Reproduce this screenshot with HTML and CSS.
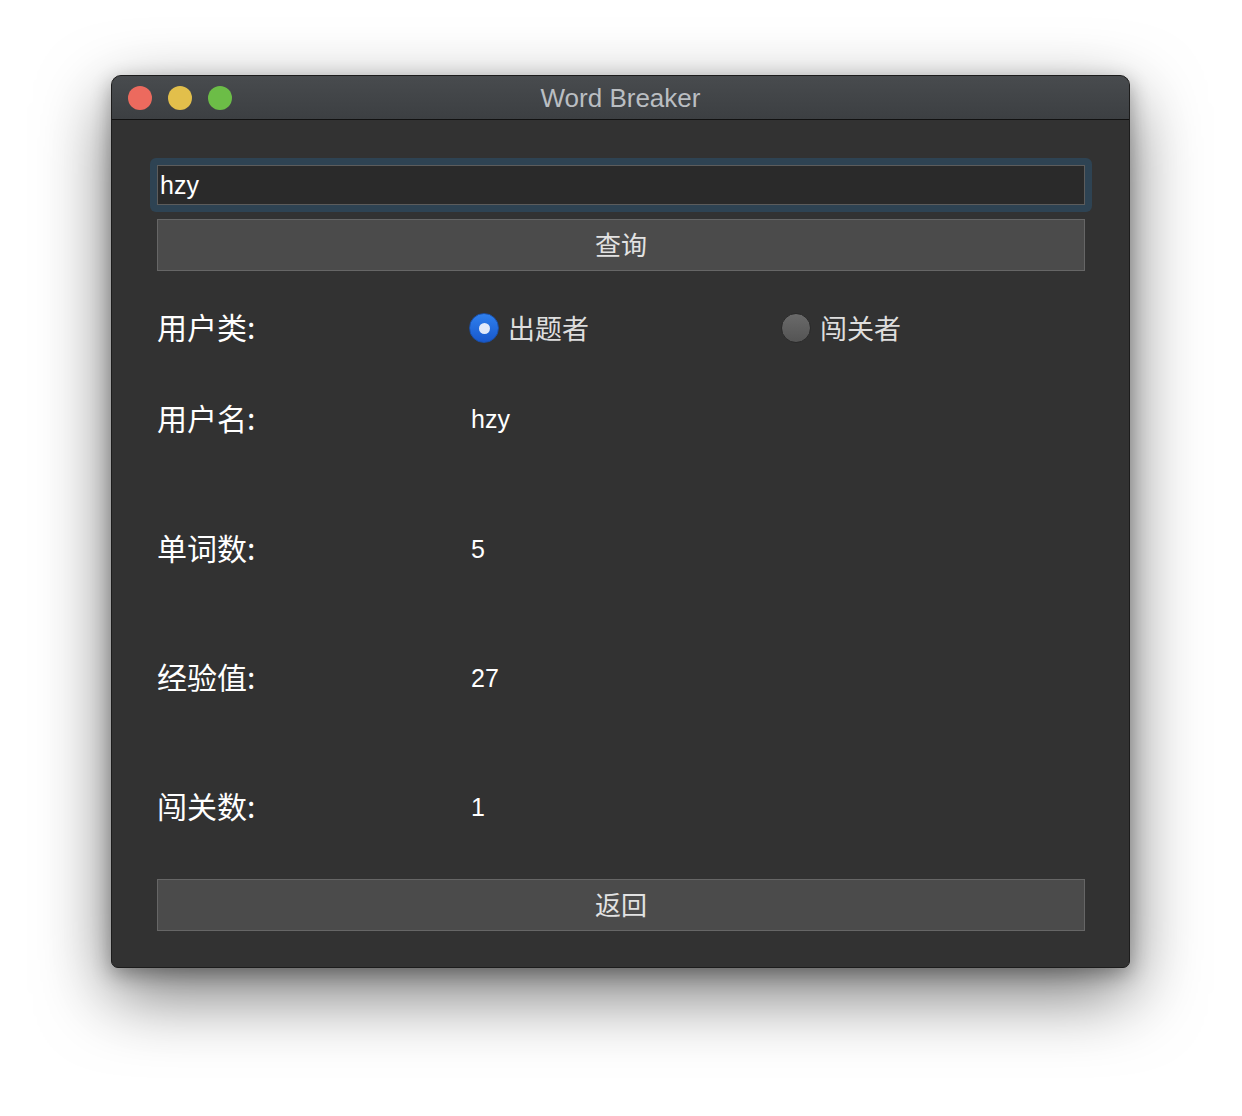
FILE: index.html
```html
<!DOCTYPE html>
<html lang="zh-CN">
<head>
  <meta charset="UTF-8">
  <meta name="viewport" content="width=device-width, initial-scale=1.0">
  <title>Word Breaker</title>
  <link rel="stylesheet" href="styles.css">
</head>
<body>
  <div class="window">
    <div class="titlebar">
      <div class="lights">
        <span class="light close"></span>
        <span class="light min"></span>
        <span class="light max"></span>
      </div>
      <div class="title">Word Breaker</div>
      <div></div>
    </div>
    <div class="content">
      <div class="focus-ring">
        <input type="text" class="search-input" value="hzy">
      </div>
      <button type="button" class="btn">查询</button>

      <div class="info">
        <div class="label">用户类:</div>
        <label class="radio">
          <span class="radio-dot checked"></span>
          <span class="radio-text">出题者</span>
        </label>
        <label class="radio">
          <span class="radio-dot"></span>
          <span class="radio-text">闯关者</span>
        </label>

        <div class="label">用户名:</div>
        <div class="value">hzy</div>
        <div></div>

        <div class="label">单词数:</div>
        <div class="value">5</div>
        <div></div>

        <div class="label">经验值:</div>
        <div class="value">27</div>
        <div></div>

        <div class="label">闯关数:</div>
        <div class="value">1</div>
        <div></div>
      </div>

      <button type="button" class="btn btn-back">返回</button>
    </div>
  </div>
</body>
</html>
```

FILE: styles.css
```css
html {
  background-color: #ffffff;
}

body {
  margin: 0;
  min-height: 1116px;
  box-sizing: border-box;
  padding: 75px 111px 0;
  background-color: #ffffff;
  font-family: "Liberation Sans", "Noto Sans CJK SC", sans-serif;
}

.window {
  width: 1019px;
  box-sizing: border-box;
  border: 1px solid #1c1c1c;
  border-radius: 10px 10px 7px 7px;
  background-color: #323232;
  box-shadow: 0 26px 70px rgba(0, 0, 0, 0.55), 0 6px 20px rgba(0, 0, 0, 0.3);
  overflow: hidden;
}

.titlebar {
  height: 43px;
  display: grid;
  grid-template-columns: 1fr auto 1fr;
  align-items: center;
  background: linear-gradient(#484b4e, #3c3f42);
  border-bottom: 1px solid #111111;
}

.lights {
  display: flex;
  gap: 16px;
  padding-left: 16px;
}

.light {
  width: 24px;
  height: 24px;
  border-radius: 50%;
}

.close { background-color: #ec6a5e; }
.min { background-color: #e2bf4b; }
.max { background-color: #6cbd47; }

.title {
  font-size: 26px;
  color: #babec2;
  padding-top: 2px;
}

.content {
  padding: 38px 44px 36px 45px;
}

.focus-ring {
  margin: 0 -7px;
  padding: 7px;
  border-radius: 6px;
  background-color: #2e4353;
}

.search-input {
  display: block;
  width: 100%;
  height: 40px;
  box-sizing: border-box;
  margin: 0;
  padding: 0 2px;
  border: 1px solid #5c5c5c;
  background-color: #2a2a2a;
  color: #ffffff;
  font-family: "Liberation Sans", sans-serif;
  font-size: 25px;
  outline: none;
}

.btn {
  display: block;
  width: 100%;
  height: 52px;
  margin-top: 7px;
  padding: 0 0 4px;
  border: 1px solid #666666;
  background-color: #4b4b4b;
  color: #e2e2e2;
  font-family: "Noto Sans CJK SC", sans-serif;
  font-size: 26px;
}

.btn-back {
  margin-top: 52px;
}

.info {
  margin-top: 37px;
  display: grid;
  grid-template-columns: 313px 312px 1fr;
  grid-template-rows: 91px 130px 129px 129px 40px;
  align-items: start;
}

.label {
  height: 40px;
  line-height: 36px;
  color: #ffffff;
  font-family: "Noto Sans CJK SC", sans-serif;
  font-size: 30px;
}

.value {
  height: 40px;
  line-height: 40px;
  color: #ffffff;
  font-size: 25px;
  padding-left: 1px;
}

.radio {
  height: 40px;
  display: flex;
  align-items: center;
  gap: 9px;
  margin-left: -1px;
}

.radio-dot {
  width: 30px;
  height: 30px;
  box-sizing: border-box;
  border-radius: 50%;
  background: linear-gradient(#6a6a6a, #545454);
  border: 1px solid #2a2a2a;
  display: flex;
  align-items: center;
  justify-content: center;
}

.radio-dot.checked {
  background: linear-gradient(#2f80ee, #1858cc);
  border-color: #1a4fa8;
}

.radio-dot.checked::after {
  content: "";
  width: 11px;
  height: 11px;
  border-radius: 50%;
  background-color: #e2eafa;
}

.radio-text {
  color: #dedede;
  font-family: "Noto Sans CJK SC", sans-serif;
  font-size: 27px;
  padding-bottom: 2px;
}
```
